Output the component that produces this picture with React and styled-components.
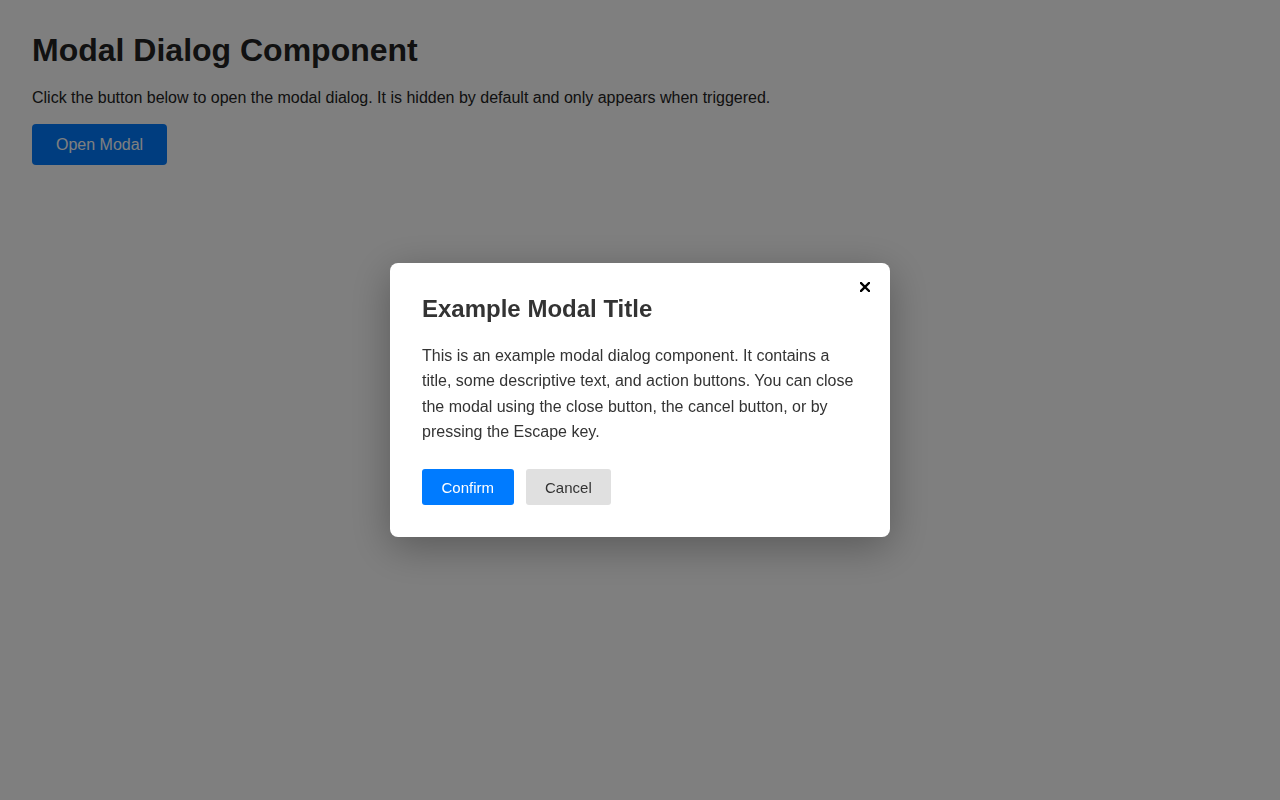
import React, { useState } from 'react';
import styled, { createGlobalStyle } from 'styled-components';

const GlobalStyle = createGlobalStyle`
  html, body {
    margin: 0;
    padding: 0;
    background: #ffffff;
    font-family: "Liberation Sans", Arial, Helvetica, sans-serif;
    color: #222;
  }
  * { box-sizing: border-box; }
`;

const Page = styled.main`
  padding: 32px;
`;

const Heading = styled.h1`
  margin: 0 0 16px;
  font-size: 32px;
  line-height: 1.15;
  font-weight: bold;
`;

const Intro = styled.p`
  margin: 0 0 14px;
  font-size: 16px;
  line-height: 1.6;
`;

const Button = styled.button`
  font-family: inherit;
  border: none;
  border-radius: ${p => (p.$size === 'lg' ? '4px' : '3px')};
  cursor: pointer;
  font-size: ${p => (p.$size === 'lg' ? '16px' : '15px')};
  height: ${p => (p.$size === 'lg' ? '41px' : '36px')};
  padding: ${p => (p.$size === 'lg' ? '0 24px' : '0 19.5px')};
  background: ${p => (p.$variant === 'secondary' ? '#e0e0e0' : '#007bff')};
  color: ${p => (p.$variant === 'secondary' ? '#333' : '#fff')};
`;

const Overlay = styled.div`
  position: fixed;
  inset: 0;
  background: rgba(0, 0, 0, 0.5);
  display: flex;
  align-items: center;
  justify-content: center;
`;

const Dialog = styled.div`
  position: relative;
  width: 500px;
  background: #fff;
  border-radius: 8px;
  padding: 32px;
  box-shadow: 0 10px 40px rgba(0, 0, 0, 0.3);
  color: #333;
`;

const CloseButton = styled.button`
  position: absolute;
  top: 19px;
  right: 20px;
  width: 10px;
  height: 10px;
  border: none;
  background: none;
  padding: 0;
  display: flex;
  cursor: pointer;
`;

const Title = styled.h2`
  margin: 0 0 19px;
  font-size: 24px;
  line-height: 1.2;
  font-weight: bold;
`;

const Body = styled.p`
  margin: 0 0 24px;
  font-size: 16px;
  line-height: 1.6;
`;

const Actions = styled.div`
  display: flex;
  gap: 12px;
`;

export default function App() {
  const [open, setOpen] = useState(true);
  return (
    <>
      <GlobalStyle />
      <Page>
        <Heading>Modal Dialog Component</Heading>
        <Intro>
          Click the button below to open the modal dialog. It is hidden by default and only appears when triggered.
        </Intro>
        <Button $size="lg" onClick={() => setOpen(true)}>Open Modal</Button>
      </Page>
      {open && (
        <Overlay>
          <Dialog role="dialog" aria-modal="true">
            <CloseButton aria-label="Close" onClick={() => setOpen(false)}>
              <svg width="10" height="10" viewBox="0 0 10 10">
                <path d="M1 1L9 9M9 1L1 9" stroke="#000" strokeWidth="2.4" strokeLinecap="square" />
              </svg>
            </CloseButton>
            <Title>Example Modal Title</Title>
            <Body>
              This is an example modal dialog component. It contains a title, some descriptive text, and action
              buttons. You can close the modal using the close button, the cancel button, or by pressing the Escape
              key.
            </Body>
            <Actions>
              <Button onClick={() => setOpen(false)}>Confirm</Button>
              <Button $variant="secondary" onClick={() => setOpen(false)}>Cancel</Button>
            </Actions>
          </Dialog>
        </Overlay>
      )}
    </>
  );
}
